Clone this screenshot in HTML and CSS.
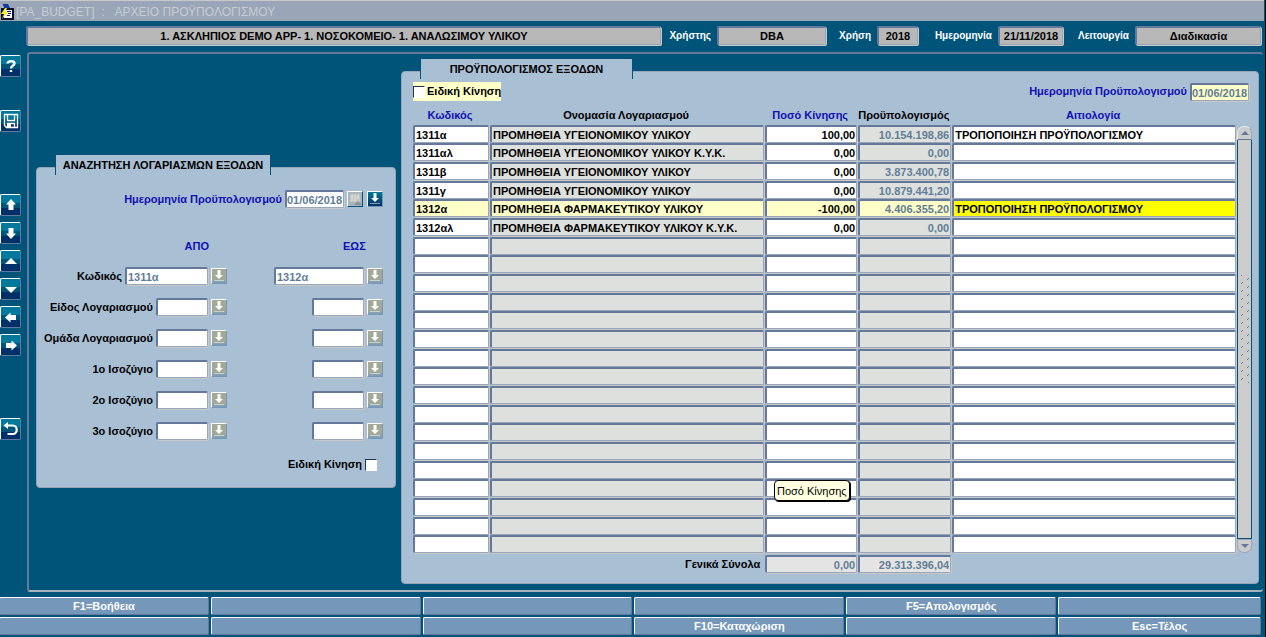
FILE: index.html
```html
<!DOCTYPE html>
<html lang="el">
<head>
<meta charset="utf-8">
<title>PA_BUDGET</title>
<link rel="stylesheet" href="styles.css">
</head>
<body>
<svg class="defs" aria-hidden="true">
  <symbol id="i-list" viewBox="0 0 14 14"><path d="M5.500 1h3v5h2.500L7 10 3 6h2.500z" fill="#fff"/><path d="M2.500 11.500h10" stroke="#fff" stroke-dasharray="1 1"/></symbol>
</svg>
<header class="titlebar">
  <svg class="app-icon" viewBox="0 0 14 17" aria-hidden="true"><path d="M2 1h6l2 4H4z" fill="#123a9c"/><path d="M1 2h2M2 4h2" stroke="#c8d0dc"/><path d="M1 5h13v12H1z" fill="#10102a"/><path d="M4 7h8v8H4z" fill="#fff"/><path d="M7 8.500h4M8 10.500h3M7 12.500h3" stroke="#15157a"/><path d="M5 5 1 11h3l-2 5 6-7H5l2-4z" fill="#f7ee1c"/></svg>
  <h1 class="title">[PA_BUDGET] &nbsp;: &nbsp; ΑΡΧΕΙΟ ΠΡΟΫΠΟΛΟΓΙΣΜΟΥ</h1>
</header>
<div class="info">
  <output class="box box-org">1. ΑΣΚΛΗΠΙΟΣ DEMO APP- 1. ΝΟΣΟΚΟΜΕΙΟ- 1. ΑΝΑΛΩΣΙΜΟΥ ΥΛΙΚΟΥ</output>
  <label class="cap cap-user" for="user">Χρήστης</label><output class="box box-user" id="user">DBA</output>
  <label class="cap cap-year" for="year">Χρήση</label><output class="box box-year" id="year">2018</output>
  <label class="cap cap-date" for="today">Ημερομηνία</label><output class="box box-date" id="today">21/11/2018</output>
  <label class="cap cap-mode" for="mode">Λειτουργία</label><output class="box box-mode" id="mode">Διαδικασία</output>
</div>
<div class="work">
  <nav class="tools">
    <button class="tool" aria-label="Βοήθεια"><svg viewBox="0 0 18 18"><path d="M5.500 6.500C5.500 3.500 12.500 3.500 12.500 6.500 12.500 8.500 9 8.500 9 11.500M9 13v2" fill="none" stroke="#fff" stroke-width="2.400"/></svg></button>
    <button class="tool gap-s" aria-label="Αποθήκευση"><svg viewBox="0 0 18 18"><path d="M2.500 2.500h13v13h-11l-2-2zM5.500 2.500v6h7v-6M5.500 15.500v-4h7v4" fill="none" stroke="#fff" stroke-width="1.300"/><path d="M6 12h3v3H6z" fill="#fff"/></svg></button>
    <button class="tool gap-l" aria-label="Πάνω"><svg viewBox="0 0 18 18"><path d="M9 3l5 5.500h-2.500V14h-5V8.500H4z" fill="#fff"/></svg></button>
    <button class="tool" aria-label="Κάτω"><svg viewBox="0 0 18 18"><path d="M9 15l5-5.500h-2.500V4h-5v5.500H4z" fill="#fff"/></svg></button>
    <button class="tool" aria-label="Προηγούμενη σελίδα"><svg viewBox="0 0 18 18"><path d="M9 6l6 6H3z" fill="#fff"/></svg></button>
    <button class="tool" aria-label="Επόμενη σελίδα"><svg viewBox="0 0 18 18"><path d="M9 13l6-6H3z" fill="#fff"/></svg></button>
    <button class="tool" aria-label="Αριστερά"><svg viewBox="0 0 18 18"><path d="M3 9.500l5.500-5V7H14v5H8.500v2.500z" fill="#fff"/></svg></button>
    <button class="tool" aria-label="Δεξιά"><svg viewBox="0 0 18 18"><path d="M15 9.500l-5.500-5V7H4v5h5.500v2.500z" fill="#fff"/></svg></button>
    <button class="tool gap-l" aria-label="Επιστροφή"><svg viewBox="0 0 18 18"><path d="M4.500 5.500H11a3.500 4 0 0 1 0 8.500H5.500" fill="none" stroke="#fff" stroke-width="2.200"/><path d="M1.500 5.500 6 2v7z" fill="#fff"/></svg></button>
  </nav>
  <main class="frame">
    <section class="panel search">
      <h2 class="tab tab-search">ΑΝΑΖΗΤΗΣΗ ΛΟΓΑΡΙΑΣΜΩΝ ΕΞΟΔΩΝ</h2>
      <div class="daterow">
        <label class="blue" for="sdate">Ημερομηνία Προϋπολογισμού</label>
        <input class="field w-date" id="sdate" value="01/06/2018">
        <button class="mini cal" aria-label="Ημερολόγιο"><svg viewBox="0 0 14 14"><path d="M2 2h10v8H2z" fill="#c3c7c4"/><path d="M3 4h8M3 6h8M3 8h6" stroke="#e8e8e4" stroke-dasharray="2 1"/><path d="M6 13l4-4 4 4z" fill="#8d9194"/></svg></button>
        <button class="mini dark" aria-label="Λίστα"><svg><use href="#i-list"/></svg></button>
      </div>
      <div class="ranges">
        <span class="blue head-from">ΑΠΟ</span><span class="blue head-to">ΕΩΣ</span>
      </div>
      <div class="rows" id="ranges"></div>
      <div class="special"><label for="sp">Ειδική Κίνηση</label><input class="check" type="checkbox" id="sp"></div>
    </section>
    <section class="panel budget">
      <h2 class="tab tab-budget">ΠΡΟΫΠΟΛΟΓΙΣΜΟΣ ΕΞΟΔΩΝ</h2>
      <div class="top">
        <label class="flag"><input class="check" type="checkbox">Ειδική Κίνηση</label>
        <div class="topdate"><label class="blue" for="bdate">Ημερομηνία Προϋπολογισμού</label><input class="field w-date pale" id="bdate" value="01/06/2018"></div>
      </div>
      <div class="sheet">
        <table class="grid">
          <colgroup><col class="c-code"><col class="c-name"><col class="c-amount"><col class="c-budget"><col></colgroup>
          <thead><tr><th class="blue">Κωδικός</th><th>Ονομασία Λογαριασμού</th><th class="blue">Ποσό Κίνησης</th><th>Προϋπολογισμός</th><th class="blue">Αιτιολογία</th></tr></thead>
          <tbody id="lines"></tbody>
          <tfoot><tr><td></td><td class="total">Γενικά Σύνολα</td><td><input class="field num sum" aria-label="Σύνολο κίνησης" value="0,00" readonly></td><td><input class="field num sum" aria-label="Σύνολο προϋπολογισμού" value="29.313.396,04" readonly></td><td></td></tr></tfoot>
        </table>
        <div class="scroll">
          <button class="arrow up" aria-label="Κύλιση πάνω"><svg viewBox="0 0 8 4"><path d="M4 0l4 4H0z" fill="#64789b"/></svg></button>
          <div class="thumb"><div class="grip"></div></div>
          <button class="arrow down" aria-label="Κύλιση κάτω"><svg viewBox="0 0 8 4"><path d="M4 4l4-4H0z" fill="#64789b"/></svg></button>
        </div>
        <div class="tip" role="tooltip">Ποσό Κίνησης</div>
      </div>
    </section>
  </main>
</div>
<footer class="keys">
  <button class="key">F1=Βοήθεια</button><button class="key"></button><button class="key"></button><button class="key"></button><button class="key">F5=Απολογισμός</button><button class="key"></button>
  <button class="key"></button><button class="key"></button><button class="key"></button><button class="key">F10=Καταχώριση</button><button class="key"></button><button class="key">Esc=Τέλος</button>
</footer>
<script src="app.js"></script>
</body>
</html>
```
FILE: styles.css
```css
* { box-sizing: border-box; }
body {
  margin: 0;
  min-height: 100vh;
  display: flex;
  flex-direction: column;
  background: #005479;
  border-right: 1px solid #000;
  color: #000;
  font: bold 11px/13px "Liberation Sans", Arial, sans-serif;
}
button, input { font: inherit; color: inherit; margin: 0; padding: 0; border-radius: 0; }
svg { display: block; }
.defs { position: absolute; width: 0; height: 0; }
.blue { color: #1010b4; }

.titlebar {
  height: 21px;
  display: flex;
  align-items: center;
  background: #98a6b8;
  border-top: 1px solid #c8c8c8;
  margin-right: 1px;
}
.app-icon { width: 14px; height: 17px; }
.title { margin: 2px 0 0 2px; font-size: 12px; line-height: 16px; font-weight: normal; color: #c8ccd0; }

.info { display: flex; align-items: center; padding: 5px 4px 0 26px; }
.box {
  height: 19px;
  line-height: 15px;
  padding-top: 1px;
  text-align: center;
  background: #b8b8b8;
  border: 2px solid #64789b;
  border-right: 1px solid #98a6b8;
  border-bottom: 1px solid #98a6b8;
  border-radius: 2px;
  box-shadow: 1px 1px 0 #c8c8c8;
}
.box-org { flex: 1; }
.box-user { width: 109px; }
.box-year { width: 41px; }
.box-date { width: 65px; }
.box-mode { width: 126px; }
.cap { font-size: 10px; color: #fff; text-align: right; padding-right: 6px; }
.cap-user { width: 56px; }
.cap-year { width: 51px; }
.cap-date { width: 80px; }
.cap-mode { width: 72px; }

.work { flex: 1; display: flex; margin-top: 7px; }
.tools { width: 27px; padding-top: 3px; display: flex; flex-direction: column; gap: 6px; }
.tool {
  width: 21px;
  height: 22px;
  padding: 1px;
  border: 1px solid #64789b;
  border-top-color: #fff;
  border-left-color: #fff;
  border-radius: 2px;
  background: linear-gradient(#00799c 0, #00799c 40%, #005479 40%, #005479 65%, #003068 65%);
}
.tool svg { width: 18px; height: 18px; }
.gap-s { margin-top: 27px; }
.gap-l { margin-top: 56px; }

.frame {
  flex: 1;
  display: flex;
  align-items: flex-start;
  gap: 5px;
  padding: 17px 4px 6px 7px;
  margin-right: 2px;
  border: 2px solid #64789b;
  border-right-width: 0;
  border-bottom-color: #a8b0b8;
  border-radius: 3px;
}
.panel {
  display: flex;
  flex-direction: column;
  background: #a9bfd4;
  border: 1px solid #98a6b8;
  border-radius: 4px;
}
.tab {
  margin: -13px 0 0;
  height: 20px;
  align-self: flex-start;
  padding-top: 4px;
  font-size: 11px;
  line-height: 13px;
  text-align: center;
  background: #a9bfd4;
  border: solid #005479;
  border-width: 0 1px;
}
.tab-search { width: 216px; margin-left: 18px; }
.tab-budget { width: 213px; margin-left: 18px; }
.field {
  display: block;
  width: 100%;
  height: 18px;
  padding: 1px 1px 0 1px;
  background: #fff;
  border: 2px solid #64789b;
  border-right: 1px solid #98a6b8;
  border-bottom: 1px solid #98a6b8;
  border-radius: 2px;
  box-shadow: 1px 1px 0 #c8c8c8;
  outline: none;
}

.search { width: 360px; margin-top: 96px; padding-bottom: 16px; color: #000; }
.search .field { color: #5f7e96; }
.daterow { display: flex; justify-content: flex-end; align-items: center; margin: 15px 12px 0 0; }
.daterow label { margin-right: 3px; }
.w-date { width: 59px; color: #5f7e96; }
.field.w-date { padding-left: 0; padding-right: 0; }
.mini {
  flex: none;
  width: 16px;
  height: 16px;
  margin-left: 3px;
  border: 1px solid #7597b9;
  border-top-color: #fff;
  border-left-color: #fff;
  background: linear-gradient(#a3a996 0, #a3a996 70%, #7d9cb8);
}
.mini svg { width: 14px; height: 14px; }
.daterow .cal { background: #a9b4bd; border-color: #fff #005479 #005479 #fff; }
.daterow .dark { margin-left: 4px; background: linear-gradient(#00799c, #005479 50%, #003068); }
.ranges { display: grid; grid-template-columns: 320px auto; margin-top: 32px; }
.head-from { padding-right: 148px; text-align: right; }
.head-to { margin-left: -14px; }
.rows { display: grid; gap: 13px; margin: 14px 12px 0 0; }
.range { display: grid; grid-template-columns: 190px 1fr; }
.side { display: flex; justify-content: flex-end; align-items: center; }
.side label { margin-right: 3px; white-space: nowrap; }
.rows .mini { margin-left: 3px; }
.w-from { width: 83px; }
.w-to { width: 90px; }
.w-short { width: 52px; }
.check {
  appearance: none;
  flex: none;
  width: 12px;
  height: 12px;
  background: #fff;
  border: 1px solid #fff;
  border-top-color: #26344e;
  border-left-color: #26344e;
}
.special { display: flex; justify-content: flex-end; align-items: center; gap: 3px; margin: 18px 18px 0 0; }

.budget { flex: 1; position: relative; padding-bottom: 9px; }
.top { display: flex; justify-content: space-between; align-items: center; margin: 3px 9px 0 11px; }
.flag { display: flex; align-items: center; gap: 2px; height: 19px; background: #ffffc8; }
.topdate { display: flex; align-items: center; gap: 3px; }
.pale { background: #ffffc8; }
.sheet { position: relative; display: flex; margin: 5px 6px 0 11px; }
.grid { flex: 1; width: 100%; table-layout: fixed; border-collapse: collapse; }
.c-code { width: 77px; }
.c-name { width: 33.4%; }
.c-amount { width: 93px; }
.c-budget { width: 94px; }
.grid th { height: 19px; padding: 3px 3px 3px 0; white-space: nowrap; }
.grid td { height: 19px; padding: 0 1px 0 0; vertical-align: top; }
.grid tbody tr:nth-child(3n+1) td { height: 18px; }
.grid .num { text-align: right; }
.grid .ro { background: #dee0de; }
.grid .muted, .grid .sum { color: #5f7e96; }
.grid .sum { background: #e4e4e4; }
.grid .current .field { background: #ffffc8; }
.grid .current .focus { background: #ff0; }
.grid tfoot td { height: 20px; padding-top: 1px; }
.grid tfoot .total { text-align: right; padding: 4px 5px 0 0; }

.scroll { flex: none; width: 15px; margin: 20px 0 21px; display: flex; flex-direction: column; }
.arrow {
  display: grid;
  place-items: center;
  width: 15px;
  height: 14px;
  border: 1px solid #98a6b8;
  background: #ccc;
}
.arrow svg { width: 8px; height: 4px; }
.up { border-radius: 7px 7px 0 0; border-color: #e8e8e8 #98a6b8 #64789b #e8e8e8; }
.down { border-radius: 0 0 7px 7px; }
.thumb {
  flex: 1;
  display: flex;
  flex-direction: column;
  justify-content: center;
  align-items: center;
  padding-bottom: 20px;
  background: #ccc;
  border: 1px solid #005479;
  border-top-width: 0;
}
.grip {
  width: 8px;
  height: 108px;
  background:
    linear-gradient(135deg, transparent 45%, #64789b 45%, #64789b 55%, transparent 55%) 0 4px / 2px 8px repeat-y,
    linear-gradient(135deg, transparent 45%, #64789b 45%, #64789b 55%, transparent 55%) 6px 0 / 2px 8px repeat-y;
}
.tip {
  position: absolute;
  left: 361px;
  top: 374px;
  padding: 4px 2px 2px;
  font-weight: normal;
  white-space: nowrap;
  background: #ffffe1;
  border: 1px solid #000;
  border-radius: 4px;
  box-shadow: 1px 1px 0 #000;
}

.keys {
  display: grid;
  grid-template-columns: repeat(5, minmax(0, 210fr)) minmax(0, 203fr);
  gap: 2px;
  margin: 5px 4px 2px -1px;
}
.key {
  height: 18px;
  color: #fff;
  background: #7597b9;
  border: 1px solid #64789b;
  border-top-color: #fff;
  border-left-color: #fff;
  border-radius: 2px;
}
```
FILE: app.js
```js
const lines = [
  ["1311α", "ΠΡΟΜΗΘΕΙΑ ΥΓΕΙΟΝΟΜΙΚΟΥ ΥΛΙΚΟΥ", "100,00", "10.154.198,86", "ΤΡΟΠΟΠΟΙΗΣΗ ΠΡΟΫΠΟΛΟΓΙΣΜΟΥ"],
  ["1311αλ", "ΠΡΟΜΗΘΕΙΑ ΥΓΕΙΟΝΟΜΙΚΟΥ ΥΛΙΚΟΥ Κ.Υ.Κ.", "0,00", "0,00", ""],
  ["1311β", "ΠΡΟΜΗΘΕΙΑ ΥΓΕΙΟΝΟΜΙΚΟΥ ΥΛΙΚΟΥ", "0,00", "3.873.400,78", ""],
  ["1311γ", "ΠΡΟΜΗΘΕΙΑ ΥΓΕΙΟΝΟΜΙΚΟΥ ΥΛΙΚΟΥ", "0,00", "10.879.441,20", ""],
  ["1312α", "ΠΡΟΜΗΘΕΙΑ ΦΑΡΜΑΚΕΥΤΙΚΟΥ ΥΛΙΚΟΥ", "-100,00", "4.406.355,20", "ΤΡΟΠΟΠΟΙΗΣΗ ΠΡΟΫΠΟΛΟΓΙΣΜΟΥ"],
  ["1312αλ", "ΠΡΟΜΗΘΕΙΑ ΦΑΡΜΑΚΕΥΤΙΚΟΥ ΥΛΙΚΟΥ Κ.Υ.Κ.", "0,00", "0,00", ""]
];
const names = ["Κωδικός", "Ονομασία Λογαριασμού", "Ποσό Κίνησης", "Προϋπολογισμός", "Αιτιολογία"];
const kinds = ["", "ro", "num", "num ro muted", "focus"];
const visibleRows = 23;
const currentRow = 4;
let html = "";
for (let r = 0; r < visibleRows; r++) {
  const line = lines[r] || ["", "", "", "", ""];
  html += `<tr class="${r === currentRow ? "current" : ""}">` + line.map((v, c) =>
    `<td><input class="field ${kinds[c]}" aria-label="${names[c]} ${r + 1}" value="${v}"></td>`).join("") + "</tr>";
}
document.getElementById("lines").innerHTML = html;

const ranges = [
  ["Κωδικός", "1311α", "1312α"], ["Είδος Λογαριασμού", "", ""], ["Ομάδα Λογαριασμού", "", ""],
  ["1ο Ισοζύγιο", "", ""], ["2ο Ισοζύγιο", "", ""], ["3ο Ισοζύγιο", "", ""]
];
const pick = `<button class="mini" aria-label="Λίστα"><svg><use href="#i-list"/></svg></button>`;
document.getElementById("ranges").innerHTML = ranges.map(([label, from, to], i) =>
  `<div class="range"><div class="side"><label for="from${i}">${label}</label>` +
  `<input class="field ${i ? "w-short" : "w-from"}" id="from${i}" value="${from}">${pick}</div>` +
  `<div class="side"><input class="field ${i ? "w-short" : "w-to"}" aria-label="${label} έως" value="${to}">${pick}</div></div>`).join("");
```
